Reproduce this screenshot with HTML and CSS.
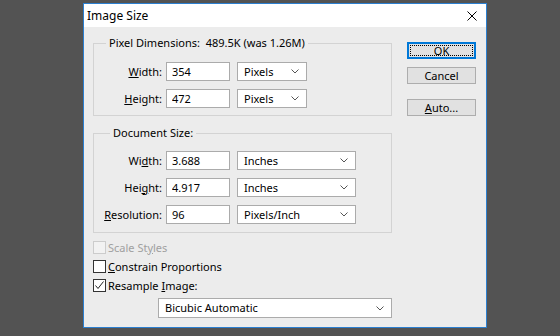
FILE: index.html
```html
<!DOCTYPE html>
<html>
<head>
    <title>Image Size</title>
    <link rel="stylesheet" href="styles.css">
</head>
<body>
    <div class="dialog">
        <div class="titlebar">
            <span class="title">Image Size</span>
            <svg class="close" width="10" height="10" viewBox="0 0 10 10">
                <path d="M0.5 0.5 L9.5 9.5 M9.5 0.5 L0.5 9.5" stroke="#000" stroke-width="1" fill="none"/>
            </svg>
        </div>
        <div class="content">
            <div class="leftcol">
                <fieldset class="group pixgroup">
                    <legend class="legend pixlegend">Pixel Dimensions:&nbsp; 489.5K (was 1.26M)</legend>
                    <div class="row">
                        <label class="lbl"><u>W</u>idth:</label>
                        <input class="field" type="text" value="354">
                        <div class="select small"><span>Pixels</span>
                            <svg width="8" height="5" viewBox="0 0 8 5"><path d="M0.5 0.5 L4 4 L7.5 0.5" stroke="#555" fill="none"/></svg>
                        </div>
                    </div>
                    <div class="row">
                        <label class="lbl"><u>H</u>eight:</label>
                        <input class="field" type="text" value="472">
                        <div class="select small"><span>Pixels</span>
                            <svg width="8" height="5" viewBox="0 0 8 5"><path d="M0.5 0.5 L4 4 L7.5 0.5" stroke="#555" fill="none"/></svg>
                        </div>
                    </div>
                </fieldset>

                <fieldset class="group docgroup">
                    <legend class="legend doclegend">Document Size:</legend>
                    <div class="row">
                        <label class="lbl">Wi<u>d</u>th:</label>
                        <input class="field" type="text" value="3.688">
                        <div class="select wide"><span>Inches</span>
                            <svg width="8" height="5" viewBox="0 0 8 5"><path d="M0.5 0.5 L4 4 L7.5 0.5" stroke="#555" fill="none"/></svg>
                        </div>
                    </div>
                    <div class="row">
                        <label class="lbl">Hei<u>g</u>ht:</label>
                        <input class="field" type="text" value="4.917">
                        <div class="select wide"><span>Inches</span>
                            <svg width="8" height="5" viewBox="0 0 8 5"><path d="M0.5 0.5 L4 4 L7.5 0.5" stroke="#555" fill="none"/></svg>
                        </div>
                    </div>
                    <div class="row">
                        <label class="lbl"><u>R</u>esolution:</label>
                        <input class="field" type="text" value="96">
                        <div class="select wide"><span>Pixels/Inch</span>
                            <svg width="8" height="5" viewBox="0 0 8 5"><path d="M0.5 0.5 L4 4 L7.5 0.5" stroke="#555" fill="none"/></svg>
                        </div>
                    </div>
                </fieldset>

                <div class="checks">
                    <div class="check disabled"><span class="box"></span><span>Scale St<u>y</u>les</span></div>
                    <div class="check"><span class="box"></span><span><u>C</u>onstrain Proportions</span></div>
                    <div class="check"><span class="box">
                        <svg width="11" height="11" viewBox="0 0 11 11"><path d="M1.5 5.5 L4 8.5 L9.5 1.5" stroke="#222" fill="none"/></svg>
                    </span><span>Resample <u>I</u>mage:</span></div>
                </div>

                <div class="select method"><span>Bicubic Automatic</span>
                    <svg width="8" height="5" viewBox="0 0 8 5"><path d="M0.5 0.5 L4 4 L7.5 0.5" stroke="#555" fill="none"/></svg>
                </div>
            </div>

            <div class="buttons">
                <button class="btn default"><span class="focus">OK</span></button>
                <button class="btn">Cancel</button>
                <button class="btn auto"><u>A</u>uto...</button>
            </div>
        </div>
    </div>
</body>
</html>
```

FILE: styles.css
```css
body {
    margin: 0;
    background: #535353;
    font: normal 11px/14px "Noto Sans", sans-serif;
    color: #000;
}

.dialog {
    margin: 3px 0 0 83px;
    width: 402px;
    height: 323px;
    border: 1px solid #2b7fd0;
    background: #ececec;
}

.titlebar {
    height: 23px;
    background: #fff;
    display: flex;
    align-items: center;
    justify-content: space-between;
    padding-left: 3px;
}

.title {
    font-size: 12px;
}

.close {
    margin-right: 9px;
}

.content {
    display: flex;
    padding: 9px 0 0 9px;
}

.leftcol {
    width: 299px;
}

.group {
    margin: 0;
    padding: 0;
    border: 1px solid #d3d3d3;
    min-width: 0;
}

.legend {
    padding: 0 3px;
    line-height: 14px;
}

.pixlegend {
    margin-left: 12px;
}

.doclegend {
    margin-left: 16px;
}

.pixgroup {
    padding: 12px 0 7px 0;
}

.docgroup {
    margin-top: 10px;
    padding: 11px 0 8px 0;
}

.row {
    display: flex;
    align-items: center;
    height: 19px;
}

.row + .row {
    margin-top: 8px;
}

.lbl {
    width: 68px;
    text-align: right;
}

.field {
    box-sizing: border-box;
    width: 64px;
    height: 19px;
    margin: 0 0 0 4px;
    padding: 0 5px;
    border: 1px solid #ababab;
    background: #fff;
    font: inherit;
    color: #000;
    outline: none;
}

.select {
    box-sizing: border-box;
    height: 19px;
    display: flex;
    align-items: center;
    justify-content: space-between;
    padding: 0 7px 0 6px;
    border: 1px solid #ababab;
    background: #fff;
}

.select svg {
    display: block;
}

.small {
    width: 70px;
    margin-left: 7px;
}

.wide {
    width: 119px;
    margin-left: 7px;
}

.checks {
    margin-top: 5px;
}

.check {
    display: flex;
    align-items: center;
    height: 19px;
}

.box {
    box-sizing: border-box;
    width: 13px;
    height: 13px;
    border: 1px solid #333;
    background: #fff;
    margin-right: 2px;
    display: flex;
    align-items: center;
    justify-content: center;
}

.disabled {
    color: #a0a0a0;
}

.disabled .box {
    border-color: #cccccc;
    background: #f2f2f2;
}

.method {
    width: 234px;
    height: 20px;
    margin: 3px 0 0 65px;
}

.buttons {
    display: flex;
    flex-direction: column;
    margin: 6px 0 0 15px;
}

.btn {
    box-sizing: border-box;
    width: 69px;
    height: 17px;
    padding: 0;
    border: 1px solid #adadad;
    background: #e1e1e1;
    font: inherit;
    line-height: 13px;
    color: #000;
}

.default {
    border: 2px solid #0078d7;
    padding: 1px;
    display: flex;
}

.focus {
    flex: 1;
    border: 1px dotted #000;
    line-height: 9px;
}

.btn + .btn {
    margin-top: 8px;
}

.auto {
    margin-top: 15px !important;
}
```
